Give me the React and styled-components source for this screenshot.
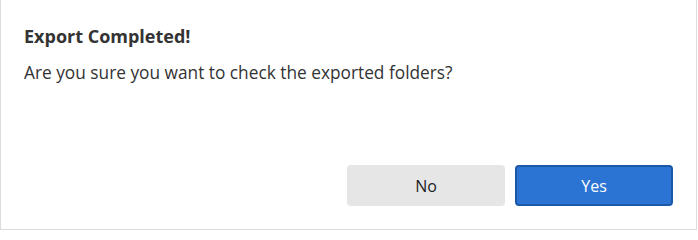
import React from "react";
import styled, { createGlobalStyle } from "styled-components";

const GlobalStyle = createGlobalStyle`
  body {
    margin: 0;
    background: #ffffff;
    font-family: "Open Sans", "Noto Sans", sans-serif;
  }
`;

const Dialog = styled.div`
  box-sizing: border-box;
  width: 697px;
  height: 230px;
  background: #ffffff;
  border: 1px solid #dcdcdc;
  border-top: none;
  display: flex;
  flex-direction: column;
  padding: 24px 23px 23px 23px;
`;

const Title = styled.h2`
  margin: 0;
  font-size: 18px;
  font-weight: 700;
  line-height: 24px;
  color: #333333;
`;

const Message = styled.p`
  margin: 13px 0 0;
  font-size: 17.3px;
  line-height: 24px;
  color: #333333;
`;

const Actions = styled.div`
  margin-top: auto;
  display: flex;
  justify-content: flex-end;
  gap: 10px;
`;

const Button = styled.button`
  box-sizing: border-box;
  width: 158px;
  height: 41px;
  border-radius: 4px;
  font-family: inherit;
  font-size: 16px;
  cursor: pointer;
  border: 2px solid ${(p) => (p.$primary ? "#1d57a8" : "#e6e6e6")};
  background: ${(p) => (p.$primary ? "#2b74d4" : "#e6e6e6")};
  color: ${(p) => (p.$primary ? "#ffffff" : "#222222")};
`;

const App = () => {
  return (
    <>
      <GlobalStyle />
      <Dialog>
        <Title>Export Completed!</Title>
        <Message>Are you sure you want to check the exported folders?</Message>
        <Actions>
          <Button>No</Button>
          <Button $primary>Yes</Button>
        </Actions>
      </Dialog>
    </>
  );
};

export default App;
